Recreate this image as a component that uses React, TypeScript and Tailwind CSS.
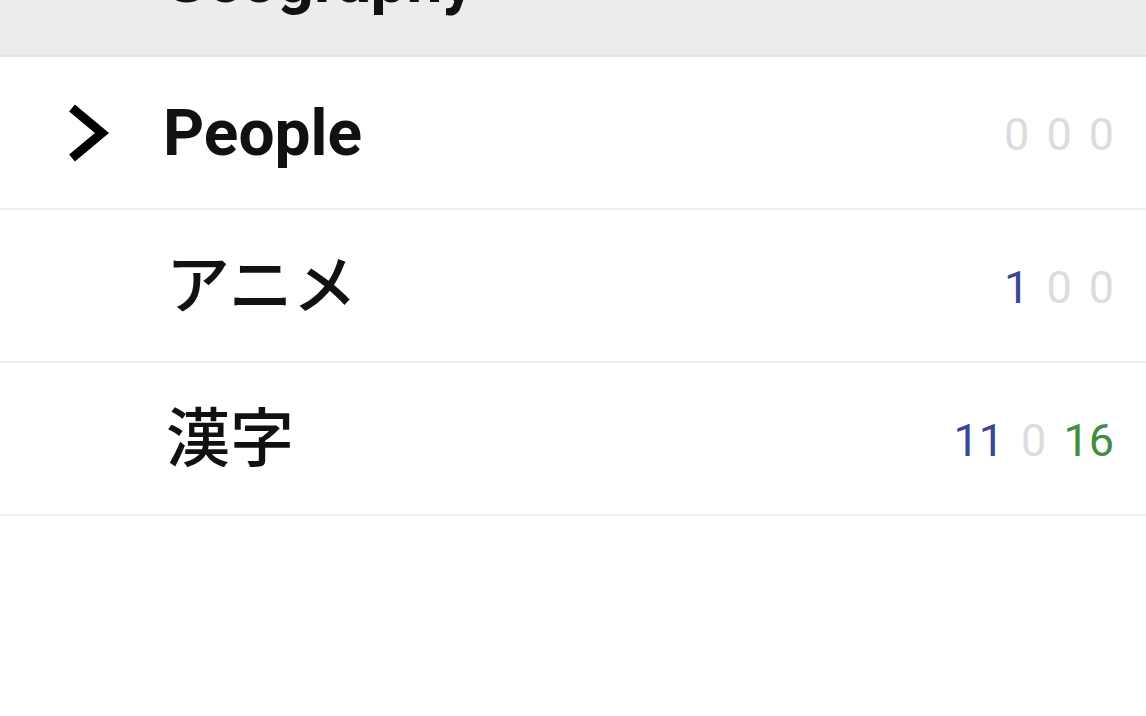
import React from "react";

type Count = { value: number; tone: "blue" | "muted" | "green" };

type Row = {
  label: string;
  cjk?: boolean;
  expandable?: boolean;
  counts: Count[];
};

const rows: Row[] = [
  {
    label: "People",
    expandable: true,
    counts: [
      { value: 0, tone: "muted" },
      { value: 0, tone: "muted" },
      { value: 0, tone: "muted" },
    ],
  },
  {
    label: "アニメ",
    cjk: true,
    counts: [
      { value: 1, tone: "blue" },
      { value: 0, tone: "muted" },
      { value: 0, tone: "muted" },
    ],
  },
  {
    label: "漢字",
    cjk: true,
    counts: [
      { value: 11, tone: "blue" },
      { value: 0, tone: "muted" },
      { value: 16, tone: "green" },
    ],
  },
];

const toneClass: Record<Count["tone"], string> = {
  blue: "text-[#3a4699]",
  muted: "text-[#dcdcdc]",
  green: "text-[#3f8f3f]",
};

function Chevron() {
  return (
    <svg width="48" height="60" viewBox="0 0 48 60" aria-hidden>
      <polyline points="10,5 40,30 10,55" fill="none" stroke="#000" strokeWidth="9" strokeLinejoin="miter" />
    </svg>
  );
}

function Counts({ counts }: { counts: Count[] }) {
  return (
    <div className="flex items-center gap-[17px] pr-[32px] pt-[4px] text-[45px] leading-none font-['Roboto',sans-serif]">
      {counts.map((c, i) => (
        <span key={i} className={toneClass[c.tone]}>
          {c.value}
        </span>
      ))}
    </div>
  );
}

function DeckRow({ row }: { row: Row }) {
  return (
    <div className="flex h-[153px] items-center border-b-2 border-[#eeeeee] bg-white">
      <div className="flex w-[163px] shrink-0 items-center pl-[62px]">{row.expandable && <Chevron />}</div>
      <div
        className={
          row.cjk
            ? "flex-1 pb-[12px] pl-[3px] text-[64px] leading-none font-medium text-[#111] font-['Noto_Sans_CJK_JP',sans-serif]"
            : "flex-1 pt-[2px] text-[64px] leading-none font-bold text-[#111] font-['Roboto',sans-serif]"
        }
      >
        {row.label}
      </div>
      <Counts counts={row.counts} />
    </div>
  );
}

export default function App() {
  return (
    <div className="h-[716px] w-full overflow-hidden bg-white">
      <div className="-mt-[96px] flex h-[153px] items-center border-b-2 border-[#e3e3e3] bg-[#ececec]">
        <div className="w-[163px] shrink-0" />
        <div className="flex-1 pt-[2px] text-[64px] leading-none font-bold text-[#111] font-['Roboto',sans-serif]">
          Geography
        </div>
        <Counts
          counts={[
            { value: 0, tone: "muted" },
            { value: 0, tone: "muted" },
            { value: 0, tone: "muted" },
          ]}
        />
      </div>
      {rows.map((row) => (
        <DeckRow key={row.label} row={row} />
      ))}
    </div>
  );
}
